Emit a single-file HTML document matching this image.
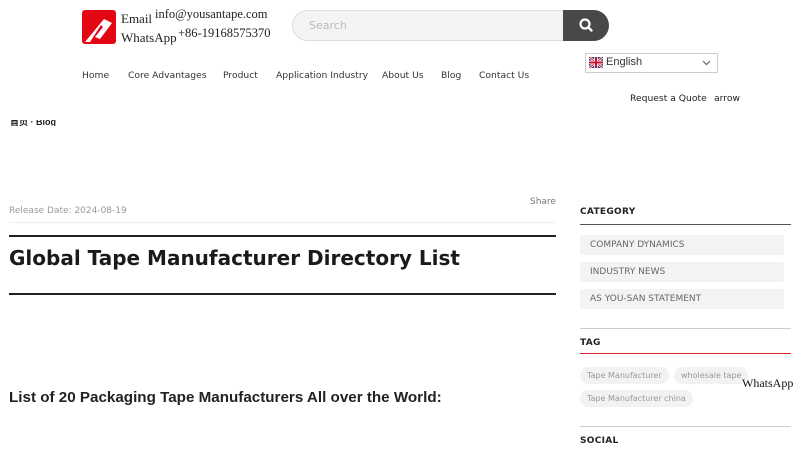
<!DOCTYPE html>
<html><head><meta charset="utf-8"><style>
*{margin:0;padding:0;box-sizing:border-box}
body{width:800px;height:450px;overflow:hidden;background:#fff;font-family:"DejaVu Sans","Liberation Sans",sans-serif;position:relative;color:#222}
.a{position:absolute;white-space:nowrap}
.serif{font-family:"Liberation Serif","DejaVu Serif",serif;color:#222}
.nav{top:70px;font-size:9.2px;color:#333}
.cat{position:absolute;left:580px;width:204px;height:20px;background:#f3f3f3;border-radius:2px;font-size:9px;color:#666;padding-left:10px;line-height:21px}
.tag{position:absolute;height:17px;background:#f2f2f2;border-radius:9px;font-size:8px;color:#999;padding:0 7px;line-height:17px}
.h{position:absolute;left:580px;font-size:9px;font-weight:bold;color:#222;letter-spacing:.3px}
</style></head><body>
<svg class="a" style="left:82px;top:10px" width="34" height="34" viewBox="0 0 34 34"><rect width="34" height="34" rx="3" fill="#e30613"/><path d="M3 32 L22 9 L30 13 L18 29 L13 27 L21 17 L19 15 L8 32 Z" fill="#fff"/></svg>
<div class="a serif" style="left:121px;top:11px;font-size:13px">Email</div>
<div class="a serif" style="left:155px;top:7px;font-size:12.5px">info@yousantape.com</div>
<div class="a serif" style="left:121px;top:30px;font-size:13px">WhatsApp</div>
<div class="a serif" style="left:178px;top:26px;font-size:12.5px">+86-19168575370</div>
<div class="a" style="left:292px;top:10px;width:276px;height:31px;border:1px solid #ddd;border-radius:16px 0 0 16px;background:#f4f4f4;font-size:11px;color:#bbb;padding:8px 0 0 16px">Search</div>
<div class="a" style="left:563px;top:10px;width:46px;height:31px;background:#484848;border-radius:0 16px 16px 0"></div>
<svg class="a" style="left:578px;top:17px" width="16" height="16" viewBox="0 0 16 16"><circle cx="7" cy="7" r="4.5" stroke="#fff" stroke-width="2.2" fill="none"/><path d="M10.3 10.3 L13.5 13.5" stroke="#fff" stroke-width="2.4" stroke-linecap="round"/></svg>
<div class="a nav" style="left:82px">Home</div>
<div class="a nav" style="left:128px">Core Advantages</div>
<div class="a nav" style="left:223px">Product</div>
<div class="a nav" style="left:276px">Application Industry</div>
<div class="a nav" style="left:382px">About Us</div>
<div class="a nav" style="left:441px">Blog</div>
<div class="a nav" style="left:479px">Contact Us</div>
<div class="a" style="left:585px;top:53px;width:133px;height:20px;border:1px solid #ccc;background:#fff"></div>
<svg class="a" style="left:589px;top:57px" width="14" height="11" viewBox="0 0 14 11"><rect width="14" height="11" fill="#1f3f8f"/><path d="M0 0L14 11M14 0L0 11" stroke="#fff" stroke-width="2.5"/><path d="M0 0L14 11M14 0L0 11" stroke="#c8102e" stroke-width="1"/><path d="M7 0V11M0 5.5H14" stroke="#fff" stroke-width="3.5"/><path d="M7 0V11M0 5.5H14" stroke="#c8102e" stroke-width="2"/></svg>
<div class="a" style="left:606px;top:56px;font-size:11px;color:#333;font-family:'Liberation Sans',sans-serif">English</div>
<svg class="a" style="left:702px;top:60px" width="9" height="6" viewBox="0 0 9 6"><path d="M1 1L4.5 4.5L8 1" stroke="#666" fill="none" stroke-width="1.2"/></svg>
<div class="a" style="left:630px;top:93px;font-size:9.2px;color:#222">Request a Quote</div>
<div class="a" style="left:714px;top:93px;font-size:9.2px;color:#222">arrow</div>
<div class="a" style="left:10px;top:120px;width:60px;height:6px;overflow:hidden"><div style="font-size:9px;font-weight:bold;margin-top:-5px;font-family:'Liberation Sans','Noto Sans CJK SC',sans-serif">首页 · Blog</div></div>
<div class="a" style="left:530px;top:197px;font-size:9px;color:#777">Share</div>
<div class="a" style="left:9px;top:206px;font-size:9px;color:#999">Release Date: 2024-08-19</div>
<div class="a" style="left:9px;top:222px;width:547px;height:1px;background:#eee"></div>
<div class="a" style="left:9px;top:235px;width:547px;height:2px;background:#222"></div>
<div class="a" style="left:9px;top:246px;font-size:20px;font-weight:bold;color:#1a1a1a">Global Tape Manufacturer Directory List</div>
<div class="a" style="left:9px;top:293px;width:547px;height:2px;background:#222"></div>
<div class="a" style="left:9px;top:389px;font-family:'Liberation Sans',sans-serif;font-size:15.2px;font-weight:bold;color:#222">List of 20 Packaging Tape Manufacturers All over the World:</div>
<div class="h" style="top:207px">CATEGORY</div>
<div class="a" style="left:580px;top:224px;width:211px;height:1px;background:#555"></div>
<div class="cat" style="top:235px">COMPANY DYNAMICS</div>
<div class="cat" style="top:262px">INDUSTRY NEWS</div>
<div class="cat" style="top:289px">AS YOU-SAN STATEMENT</div>
<div class="a" style="left:580px;top:328px;width:211px;height:1px;background:#ccc"></div>
<div class="h" style="top:338px">TAG</div>
<div class="a" style="left:580px;top:353px;width:211px;height:1px;background:#d9262e"></div>
<div class="tag" style="left:580px;top:367px">Tape Manufacturer</div>
<div class="tag" style="left:674px;top:367px">wholesale tape</div>
<div class="tag" style="left:580px;top:390px">Tape Manufacturer china</div>
<div class="a serif" style="left:742px;top:376px;font-size:12px;color:#111">WhatsApp</div>
<div class="a" style="left:580px;top:426px;width:211px;height:1px;background:#ccc"></div>
<div class="h" style="top:436px">SOCIAL</div>
</body></html>
